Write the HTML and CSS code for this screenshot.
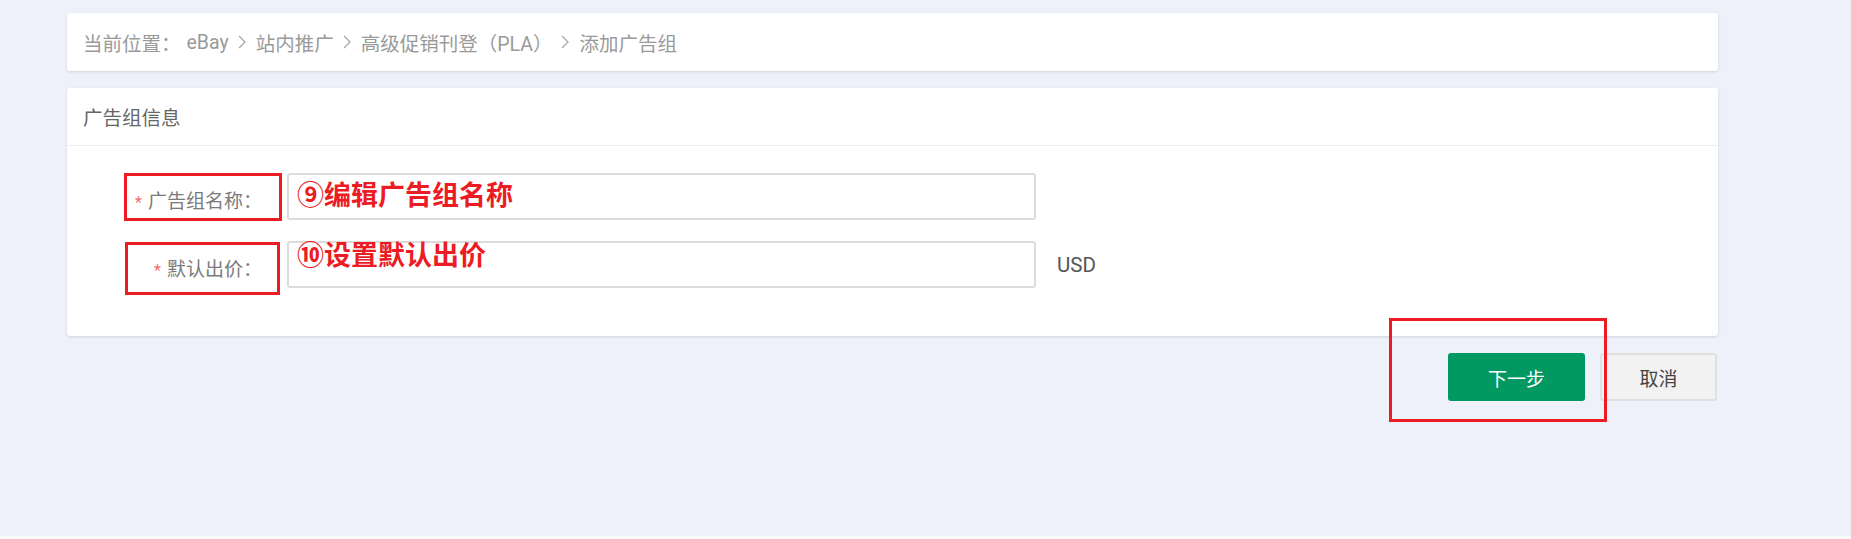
FILE: index.html
```html
<!DOCTYPE html>
<html>
<head>
  <link rel="stylesheet" href="styles.css">
</head>

<body>
  <div class="page">
    <div class="crumb card">
      <span>当前位置：</span>
      <span class="crumb-link">eBay</span>
      <svg class="sep" width="8" height="14" viewBox="0 0 8 14"><polyline points="1,1 7,7 1,13" fill="none" stroke="#a8a8a8" stroke-width="1.3"/></svg>
      <span>站内推广</span>
      <svg class="sep" width="8" height="14" viewBox="0 0 8 14"><polyline points="1,1 7,7 1,13" fill="none" stroke="#a8a8a8" stroke-width="1.3"/></svg>
      <span>高级促销刊登（PLA）</span>
      <svg class="sep" width="8" height="14" viewBox="0 0 8 14"><polyline points="1,1 7,7 1,13" fill="none" stroke="#a8a8a8" stroke-width="1.3"/></svg>
      <span>添加广告组</span>
    </div>

    <div class="panel card">
      <div class="panel-head">广告组信息</div>
      <div class="panel-body">
        <div class="row">
          <label class="label"><i>*</i>广告组名称：</label>
          <div class="field"><span class="note">⑨编辑广告组名称</span></div>
          <div class="mark mark-name"></div>
        </div>
        <div class="row">
          <label class="label"><i>*</i>默认出价：</label>
          <div class="field field-top"><span class="note">⑩设置默认出价</span></div>
          <span class="unit">USD</span>
          <div class="mark mark-bid"></div>
        </div>
      </div>
    </div>

    <div class="actions">
      <button class="btn btn-primary" type="button">下一步</button>
      <button class="btn btn-cancel" type="button">取消</button>
      <div class="mark mark-next"></div>
    </div>
  </div>
</body>

</html>
```

FILE: styles.css
```css
:root {
  --bg-color: #eef1f9;
  --mark-color: #ec1c24;
  --primary-color: #029862;
  --border-color: #dcdcdc;
}

html {
  background: #f9fafc;
}

body {
  margin: 0;
  min-height: 536px;
  background: var(--bg-color);
  font-family: Roboto, "Noto Sans CJK SC", sans-serif;
}

.page {
  width: 1651px;
  margin-left: 67px;
  padding-top: 13px;
}

.card {
  background: #fff;
  border-radius: 3px;
  box-shadow: 0 1px 3px rgba(0, 0, 0, 0.13);
}

.crumb {
  height: 58px;
  display: flex;
  align-items: center;
  padding-left: 16px;
  font-size: 19.5px;
  color: #9a9a9a;
}

.crumb-link {
  margin-left: 6px;
}

.sep {
  margin: 0 10px 0 9px;
}

.panel {
  margin-top: 17px;
}

.panel-head {
  height: 57px;
  display: flex;
  align-items: center;
  padding-left: 16px;
  border-bottom: 1px solid #eeeeee;
  font-size: 19.5px;
  color: #666;
}

.panel-body {
  padding: 27px 0 48px;
}

.row {
  position: relative;
  display: flex;
  align-items: center;
  height: 47px;
}

.row + .row {
  margin-top: 21px;
}

.label {
  width: 195px;
  padding-top: 6px;
  text-align: right;
  font-size: 19px;
  color: #7a7a7a;
}

.label i {
  font-style: normal;
  color: #f07070;
  font-size: 16px;
  margin-right: 6px;
}

.field {
  box-sizing: border-box;
  width: 749px;
  height: 47px;
  margin-left: 25px;
  padding-left: 8px;
  display: flex;
  align-items: center;
  border: 2px solid var(--border-color);
  border-radius: 3px;
  background: #fff;
}

.field-top {
  align-items: flex-start;
}

.note {
  font-size: 27px;
  font-weight: 700;
  line-height: 1;
  color: var(--mark-color);
}

.unit {
  margin-left: 21px;
  font-size: 20.5px;
  color: #555;
}

.mark {
  position: absolute;
  box-sizing: border-box;
  border: 3px solid var(--mark-color);
}

.mark-name {
  left: 57px;
  top: 0;
  width: 158px;
  height: 48px;
}

.mark-bid {
  left: 58px;
  top: 1px;
  width: 155px;
  height: 53px;
}

.actions {
  position: relative;
  display: flex;
  justify-content: flex-end;
  gap: 15px;
  margin-top: 17px;
  padding-right: 1px;
}

.btn {
  height: 48px;
  border-radius: 3px;
  font-family: inherit;
  font-size: 19px;
  cursor: pointer;
}

.btn-primary {
  width: 137px;
  border: none;
  background: var(--primary-color);
  color: #fff;
}

.btn-cancel {
  width: 117px;
  border: 2px solid #e0e0e0;
  background: #f2f2f2;
  color: #444;
}

.mark-next {
  left: 1322px;
  top: -35px;
  width: 218px;
  height: 104px;
}
```
